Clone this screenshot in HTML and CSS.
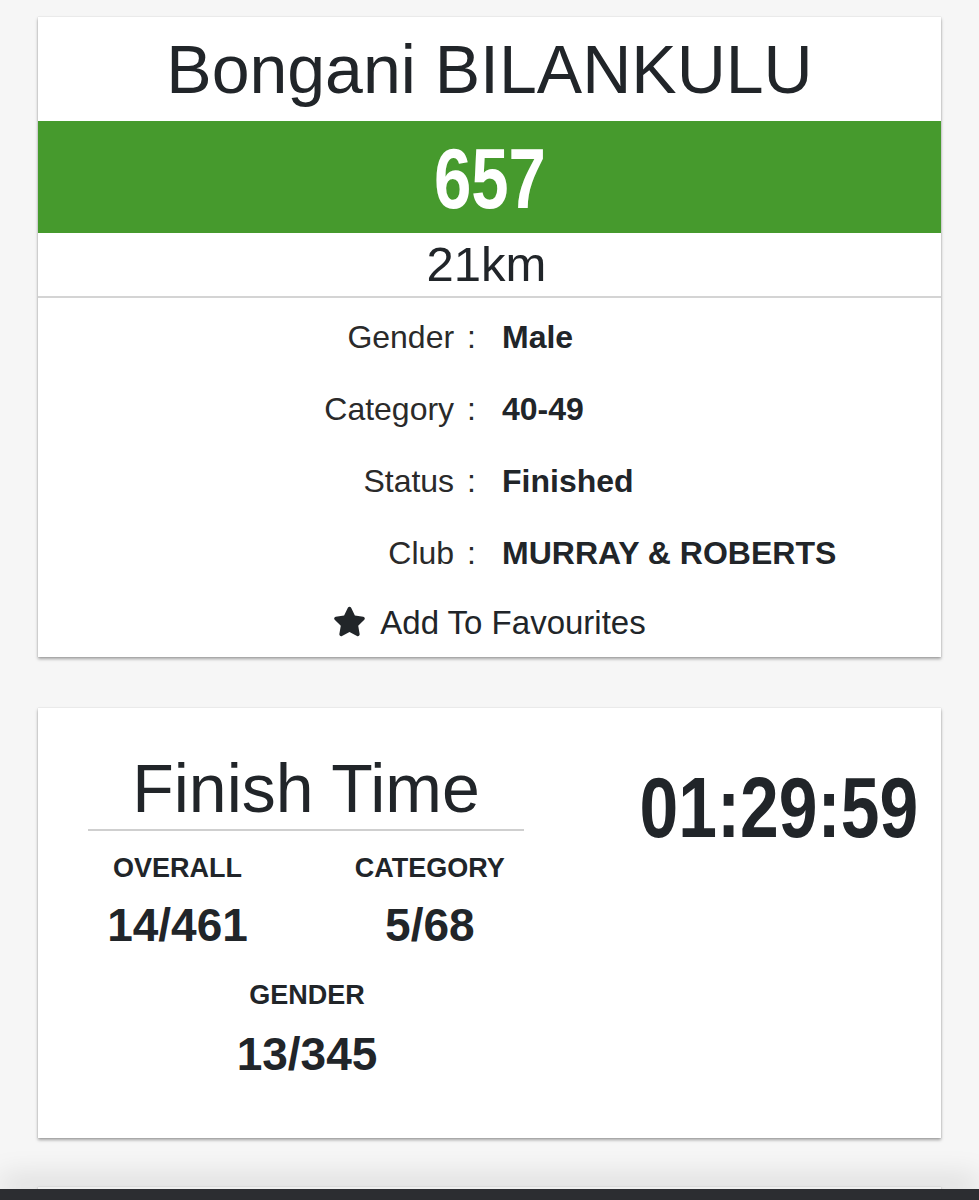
FILE: index.html
```html
<!DOCTYPE html>
<html lang="en">
<head>
<meta charset="utf-8">
<title>Bongani BILANKULU - 657</title>
<link rel="stylesheet" href="styles.css">
</head>
<body>
<main class="page">
  <section class="card athlete">
    <h1 class="name">Bongani BILANKULU</h1>
    <div class="bib"><span class="bib-num">657</span></div>
    <div class="race">21km</div>
    <div class="details">
      <div class="row"><span class="label">Gender<span class="colon">:</span></span><span class="value">Male</span></div>
      <div class="row"><span class="label">Category<span class="colon">:</span></span><span class="value">40-49</span></div>
      <div class="row"><span class="label">Status<span class="colon">:</span></span><span class="value">Finished</span></div>
      <div class="row"><span class="label">Club<span class="colon">:</span></span><span class="value">MURRAY &amp; ROBERTS</span></div>
    </div>
    <div class="fav">
      <svg class="star" viewBox="0 0 576 512" aria-hidden="true"><path d="M259.3 17.8L194 150.2 47.9 171.5c-26.2 3.8-36.7 36.1-17.7 54.6l105.7 103-25 145.5c-4.5 26.3 23.2 46 46.4 33.7L288 439.6l130.7 68.7c23.2 12.2 50.9-7.4 46.4-33.7l-25-145.5 105.7-103c19-18.5 8.5-50.8-17.7-54.6L382 150.2 316.7 17.8c-11.7-23.6-45.6-23.9-57.4 0z"/></svg>
      <span>Add To Favourites</span>
    </div>
  </section>

  <section class="card result">
    <div class="result-left">
      <h2 class="ft-title">Finish Time</h2>
      <div class="positions">
        <div class="pos"><div class="pos-label">OVERALL</div><div class="pos-value">14/461</div></div>
        <div class="pos"><div class="pos-label">CATEGORY</div><div class="pos-value">5/68</div></div>
      </div>
      <div class="positions second">
        <div class="pos"><div class="pos-label">GENDER</div><div class="pos-value">13/345</div></div>
      </div>
    </div>
    <div class="result-right">
      <span class="time">01:29:59</span>
    </div>
  </section>

  <section class="card next"></section>
</main>
<footer class="bottom-bar"></footer>
</body>
</html>
```

FILE: styles.css
```css
html, body {
  margin: 0;
  padding: 0;
}
body {
  background: #f6f6f6;
  font-family: "Liberation Sans", Arial, sans-serif;
  color: #212529;
}
.page {
  padding: 17px 38px 0 38px;
}
.card {
  background: #ffffff;
  box-shadow: 0 2px 3px rgba(0, 0, 0, 0.35), 0 0 1px rgba(0, 0, 0, 0.2);
}
.athlete {
  display: flex;
  flex-direction: column;
}
.name {
  margin: 0;
  font-weight: 400;
  font-size: 68px;
  line-height: 104px;
  text-align: center;
  color: #212529;
}
.bib {
  background: #469a2d;
  height: 112px;
  box-sizing: border-box;
  padding-top: 3px;
  text-align: center;
  line-height: 109px;
}
.bib-num {
  display: inline-block;
  font-size: 85px;
  font-weight: 700;
  color: #ffffff;
  transform: scaleX(0.79);
}
.race {
  font-size: 49px;
  line-height: 63px;
  text-align: center;
  border-bottom: 2px solid #d4d4d4;
  padding-right: 6px;
}
.details {
  display: flex;
  flex-direction: column;
  padding-top: 3px;
}
.row {
  display: grid;
  grid-template-columns: 438px 1fr;
  column-gap: 26px;
  height: 72px;
  line-height: 72px;
  font-size: 32px;
}
.label {
  text-align: right;
  color: #2a2a2a;
}
.colon {
  margin-left: 13px;
}
.value {
  font-weight: 700;
}
.fav {
  display: flex;
  align-items: center;
  justify-content: center;
  gap: 14px;
  height: 68px;
  font-size: 33px;
  line-height: 68px;
}
.star {
  width: 33px;
  height: 31px;
  fill: #212529;
  margin-top: -4px;
}
.result {
  margin-top: 51px;
  display: flex;
  padding: 39px 23px 56px 50px;
}
.result-left {
  width: 436px;
  display: flex;
  flex-direction: column;
}
.ft-title {
  margin: 0;
  font-weight: 400;
  font-size: 68px;
  line-height: 82px;
  text-align: center;
  border-bottom: 2px solid #cfcfcf;
}
.positions {
  display: flex;
  justify-content: center;
  gap: 107px;
  margin-top: 20px;
}
.positions.second {
  margin-top: 25px;
  padding-left: 2px;
}
.pos {
  display: flex;
  flex-direction: column;
  align-items: center;
}
.pos-label {
  font-size: 27px;
  font-weight: 700;
  line-height: 34px;
}
.pos-value {
  font-size: 46px;
  font-weight: 700;
  line-height: 56px;
  margin-top: 12px;
}
.second .pos-value {
  margin-top: 14px;
}
.result-right {
  flex: 1;
  display: flex;
  justify-content: flex-end;
  padding-top: 10px;
}
.time {
  display: inline-block;
  font-size: 86px;
  font-weight: 700;
  line-height: 100px;
  height: 100px;
  transform: scaleX(0.81);
  transform-origin: right center;
}
.next {
  margin-top: 49px;
  height: 40px;
}
.bottom-bar {
  position: fixed;
  left: 0;
  right: 0;
  bottom: 0;
  height: 11px;
  background: #2c2d31;
  box-shadow: 0 -8px 30px rgba(0, 0, 0, 0.22);
}
```
